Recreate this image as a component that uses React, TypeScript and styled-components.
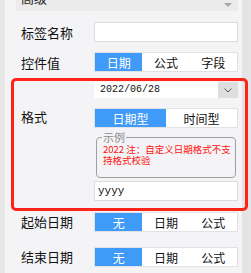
import { FunctionComponent } from 'react';
import styled, { createGlobalStyle } from 'styled-components';

const GlobalStyle = createGlobalStyle`
  html, body {
    margin: 0;
    padding: 0;
    background: #f4f4f6;
  }
  * {
    box-sizing: border-box;
  }
`;

const FONT = `'Noto Sans CJK SC', 'Noto Sans', sans-serif`;
const BLUE = '#3f9bf7';

const Root = styled.div`
  position: relative;
  width: 251px;
  height: 273px;
  display: flex;
  flex-direction: row;
  overflow: hidden;
  font-family: ${FONT};
  color: #111;
`;

const LeftStrip = styled.div`
  width: 5px;
  background: #e7e7e7;
`;

const RightStrip = styled.div`
  width: 9px;
  background: #e4e4e4;
`;

const Panel = styled.div`
  flex: 1;
  display: flex;
  flex-direction: column;
  background: #f4f4f6;
  padding: 0 4px 0 11px;
`;

const Header = styled.div`
  height: 11px;
  background: #ebebeb;
  display: flex;
  justify-content: space-between;
  align-items: flex-start;
  padding: 0 6px 0 5px;
  overflow: hidden;
`;

const HeaderText = styled.span`
  font-size: 13px;
  line-height: 16px;
  margin-top: -10px;
  color: #222;
`;

const Caret = styled.span`
  margin-top: 3px;
  width: 0;
  height: 0;
  border-left: 4px solid transparent;
  border-right: 4px solid transparent;
  border-top: 4px solid #a8a8a8;
`;

const Form = styled.div`
  display: flex;
  flex-direction: column;
  padding-left: 5px;
`;

const Row = styled.div<{ $top: number }>`
  display: grid;
  grid-template-columns: 73px 144px;
  align-items: start;
  margin-top: ${(p) => p.$top}px;
`;

const Label = styled.div<{ $offset?: number }>`
  font-size: 13px;
  line-height: 15px;
  padding-top: ${(p) => p.$offset ?? 0}px;
  white-space: nowrap;
`;

const Stack = styled.div`
  display: flex;
  flex-direction: column;
`;

const TextInput = styled.div<{ $top?: number }>`
  height: 20px;
  margin-top: ${(p) => p.$top ?? 0}px;
  background: #fff;
  border: 1px solid #dcdcdc;
  font-family: 'Liberation Mono', 'DejaVu Sans Mono', monospace;
  font-size: 11px;
  line-height: 18px;
  padding-left: 3px;
  color: #111;
`;

const Segmented = styled.div<{ $top?: number }>`
  display: flex;
  height: 20px;
  margin-top: ${(p) => p.$top ?? 0}px;
  border: 1px solid #e2e2e2;
  background: #fff;
`;

const Segment = styled.div<{ $active?: boolean }>`
  flex: 1;
  display: flex;
  align-items: center;
  justify-content: center;
  font-size: 12px;
  background: ${(p) => (p.$active ? BLUE : '#fff')};
  color: ${(p) => (p.$active ? '#fff' : '#111')};
`;

const Select = styled.div`
  display: flex;
  height: 16px;
  background: #fff;
`;

const SelectValue = styled.div`
  flex: 1;
  font-family: 'Liberation Mono', 'DejaVu Sans Mono', monospace;
  font-size: 10px;
  line-height: 16px;
  padding-left: 6px;
  color: #111;
`;

const SelectButton = styled.div`
  width: 20px;
  background: #dedede;
  display: flex;
  align-items: center;
  justify-content: center;
`;

const Example = styled.fieldset`
  margin: 0 2px;
  margin-top: 3px;
  height: 47px;
  border: 1px solid #a0a0a0;
  border-radius: 4px;
  padding: 0 2px 0 6px;
  min-width: 0;
`;

const Legend = styled.legend`
  font-size: 11px;
  line-height: 12px;
  color: #8a8a8a;
  padding: 0 1px;
  margin-left: -1px;
`;

const Note = styled.div`
  font-size: 9.5px;
  line-height: 11px;
  color: #f11;
  margin-top: 1px;
`;

const Highlight = styled.div`
  position: absolute;
  left: 11px;
  top: 78px;
  width: 237px;
  height: 133px;
  border: 3px solid #ff2419;
  border-radius: 5px;
  pointer-events: none;
`;

const SegGroup: FunctionComponent<{ items: string[]; top?: number }> = ({ items, top }) => (
  <Segmented $top={top}>
    {items.map((t, i) => (
      <Segment key={t} $active={i === 0}>
        {t}
      </Segment>
    ))}
  </Segmented>
);

const App: FunctionComponent = () => {
  return (
    <Root>
      <GlobalStyle />
      <LeftStrip />
      <Panel>
        <Header>
          <HeaderText>高级</HeaderText>
          <Caret />
        </Header>
        <Form>
          <Row $top={11}>
            <Label $offset={3}>标签名称</Label>
            <TextInput />
          </Row>
          <Row $top={10}>
            <Label $offset={3}>控件值</Label>
            <SegGroup items={['日期', '公式', '字段']} />
          </Row>
          <Row $top={10}>
            <Label $offset={27}>格式</Label>
            <Stack>
              <Select>
                <SelectValue>2022/06/28</SelectValue>
                <SelectButton>
                  <svg width="8" height="5" viewBox="0 0 8 5">
                    <polyline points="0.5,0.5 4,4 7.5,0.5" fill="none" stroke="#555" strokeWidth="1" />
                  </svg>
                </SelectButton>
              </Select>
              <SegGroup items={['日期型', '时间型']} top={10} />
              <Example>
                <Legend>示例</Legend>
                <Note>2022 注：自定义日期格式不支持格式校验</Note>
              </Example>
              <TextInput $top={3}>yyyy</TextInput>
            </Stack>
          </Row>
          <Row $top={11}>
            <Label $offset={2}>起始日期</Label>
            <SegGroup items={['无', '日期', '公式']} />
          </Row>
          <Row $top={15}>
            <Label $offset={2}>结束日期</Label>
            <SegGroup items={['无', '日期', '公式']} />
          </Row>
        </Form>
      </Panel>
      <RightStrip />
      <Highlight />
    </Root>
  );
};

export default App;
